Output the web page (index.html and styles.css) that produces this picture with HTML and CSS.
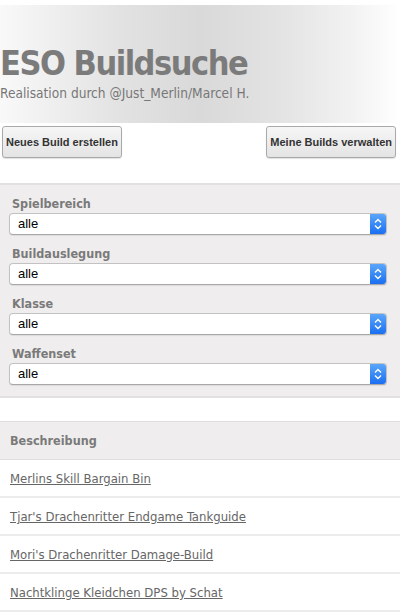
FILE: index.html
```html
<!DOCTYPE html>
<html lang="de">
<head>
<meta charset="utf-8">
<link rel="stylesheet" href="styles.css">
</head>
<body>
<header class="hero">
  <h1 class="title">ESO Buildsuche</h1>
  <p class="subtitle">Realisation durch @Just_Merlin/Marcel H.</p>
</header>
<div class="actions">
  <button class="btn">Neues Build erstellen</button>
  <button class="btn">Meine Builds verwalten</button>
</div>
<section class="filters">
  <div class="field">
    <div class="label">Spielbereich</div>
    <div class="select"><span class="value">alle</span><span class="stepper"><svg width="8" height="12" viewBox="0 0 8 12"><path d="M1 4.5 L4 1.5 L7 4.5 M1 7.5 L4 10.5 L7 7.5" fill="none" stroke="#fff" stroke-width="1.4"/></svg></span></div>
  </div>
  <div class="field">
    <div class="label">Buildauslegung</div>
    <div class="select"><span class="value">alle</span><span class="stepper"><svg width="8" height="12" viewBox="0 0 8 12"><path d="M1 4.5 L4 1.5 L7 4.5 M1 7.5 L4 10.5 L7 7.5" fill="none" stroke="#fff" stroke-width="1.4"/></svg></span></div>
  </div>
  <div class="field">
    <div class="label">Klasse</div>
    <div class="select"><span class="value">alle</span><span class="stepper"><svg width="8" height="12" viewBox="0 0 8 12"><path d="M1 4.5 L4 1.5 L7 4.5 M1 7.5 L4 10.5 L7 7.5" fill="none" stroke="#fff" stroke-width="1.4"/></svg></span></div>
  </div>
  <div class="field">
    <div class="label">Waffenset</div>
    <div class="select"><span class="value">alle</span><span class="stepper"><svg width="8" height="12" viewBox="0 0 8 12"><path d="M1 4.5 L4 1.5 L7 4.5 M1 7.5 L4 10.5 L7 7.5" fill="none" stroke="#fff" stroke-width="1.4"/></svg></span></div>
  </div>
</section>
<section class="list">
  <div class="list-head">Beschreibung</div>
  <div class="row"><a href="#">Merlins Skill Bargain Bin</a></div>
  <div class="row"><a href="#">Tjar's Drachenritter Endgame Tankguide</a></div>
  <div class="row"><a href="#">Mori's Drachenritter Damage-Build</a></div>
  <div class="row"><a href="#">Nachtklinge Kleidchen DPS by Schat</a></div>
</section>
</body>
</html>
```
FILE: styles.css
```css
* { box-sizing: border-box; }
html, body { margin: 0; padding: 0; background: #fff; }
body {
  width: 400px;
  font-family: "DejaVu Sans Condensed", "DejaVu Sans", sans-serif;
  color: #777;
  padding-top: 5px;
}
.hero {
  height: 118px;
  background: linear-gradient(to right, #f9f9f9 0%, #e2e2e2 30%, #d9d9d9 50%, #e3e3e3 70%, #f2f2f2 88%, #ffffff 100%);
  padding-top: 37px;
}
.title {
  margin: 0;
  font-size: 34px;
  line-height: 42px;
  font-weight: bold;
  color: #7b7b7b;
  letter-spacing: -1.5px;
}
.subtitle {
  margin: 0;
  font-size: 13.6px;
  line-height: 18px;
  color: #777;
}
.actions {
  display: flex;
  justify-content: space-between;
  padding: 3px 4px 0 2px;
  height: 60px;
}
.btn {
  height: 32px;
  padding: 0 3px;
  font-family: "Liberation Sans", Arial, sans-serif;
  font-weight: bold;
  font-size: 11px;
  color: #333;
  background: linear-gradient(#f6f6f6, #e4e4e4);
  border: 1px solid #a9a9a9;
  border-radius: 3px;
  box-shadow: 0 1px 1px rgba(0,0,0,0.12);
}
.filters {
  background: #efeded;
  border-top: 2px solid #e2e0e0;
  border-bottom: 2px solid #e2e0e0;
  padding: 10px 13px 11px 9px;
}
.field { height: 50px; }
.field:last-child { height: auto; }
.label {
  font-weight: bold;
  font-size: 12.5px;
  line-height: 18px;
  color: #7a7a7a;
  padding-left: 3px;
}
.select {
  display: flex;
  height: 22px;
  background: #fff;
  border: 1px solid #c2c2c2;
  border-bottom-color: #a8a8a8;
  border-radius: 4px;
  box-shadow: 0 1px 1px rgba(0,0,0,0.08);
  overflow: hidden;
}
.value {
  flex: 1;
  font-family: "Liberation Sans", Arial, sans-serif;
  font-size: 13px;
  color: #000;
  line-height: 20px;
  padding-left: 8px;
}
.stepper {
  width: 16px;
  display: flex;
  align-items: center;
  justify-content: center;
  background: linear-gradient(#5ba6fb, #1b6ff1);
}
.list { margin-top: 23px; }
.list-head {
  height: 39px;
  background: #efeded;
  border-top: 1px solid #dedede;
  border-bottom: 1px solid #dedede;
  font-weight: bold;
  font-size: 12.5px;
  line-height: 37px;
  padding-left: 10px;
  color: #7a7a7a;
}
.row {
  height: 38px;
  border-bottom: 2px solid #ececec;
  padding-left: 10px;
  line-height: 37px;
  font-size: 13px;
}
.row a { color: #666; text-decoration: underline; }
```
